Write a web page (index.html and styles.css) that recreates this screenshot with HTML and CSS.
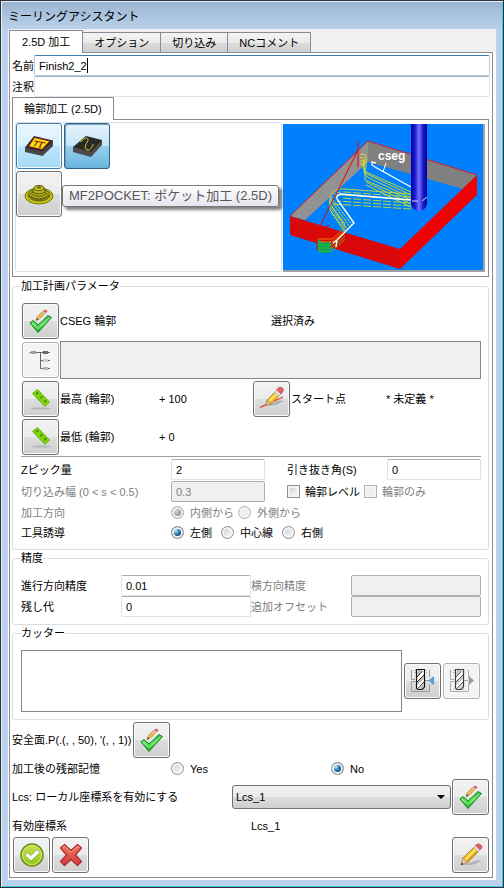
FILE: index.html
```html
<!DOCTYPE html>
<html lang="ja">

<head>
  <meta charset="UTF-8" />
  <meta name="viewport" content="width=device-width, initial-scale=1" />
  <title>ミーリングアシスタント</title>
  <link rel="stylesheet" href="styles.css">
</head>

<body>
  <svg class="symbols" aria-hidden="true">
    <defs>
      <linearGradient id="green" x1="0" y1="0" x2="0" y2="1">
        <stop offset="0" stop-color="#2fae3a" />
        <stop offset="0.5" stop-color="#5fe05a" />
        <stop offset="1" stop-color="#16a01c" />
      </linearGradient>
      <linearGradient id="lime" x1="0" y1="0" x2="0" y2="1">
        <stop offset="0" stop-color="#cfe05a" />
        <stop offset="1" stop-color="#8fc41c" />
      </linearGradient>
      <linearGradient id="red" x1="0" y1="0" x2="0" y2="1">
        <stop offset="0" stop-color="#ee7a5c" />
        <stop offset="1" stop-color="#cf3a3c" />
      </linearGradient>
      <linearGradient id="tool" x1="0" y1="0" x2="1" y2="0">
        <stop offset="0" stop-color="#0000a0" />
        <stop offset="0.25" stop-color="#1a1ad0" />
        <stop offset="0.5" stop-color="#7474ff" />
        <stop offset="0.75" stop-color="#1c1cd0" />
        <stop offset="1" stop-color="#000088" />
      </linearGradient>
    </defs>

    <symbol id="check" viewBox="0 0 24 24">
      <path d="M1 14 4 11.500 9 16 19 6.500 22.500 8.500 9 23.500Z" fill="url(#green)" stroke="#148a22" stroke-linejoin="round" />
      <path d="M3 14 9 19.500 20.500 8.500" fill="none" stroke="#a5f59c" />
      <path d="M7 11.500 8.500 7.500 13.500 2.500 16 4.500 11 9.500Z" fill="#f3bd55" stroke="#a8782c" stroke-width=".7" />
      <path d="M7 11.500 7.800 9.300 9.500 10.500Z" fill="#444" />
      <path d="M12.800 3.200 14 2 16.500 4 15.300 5.300Z" fill="#ccc" />
      <path d="M14 2Q16-.3 17.700 1.300T16.500 4Z" fill="#dc6260" />
    </symbol>

    <symbol id="tree" viewBox="0 0 24 24">
      <path d="M.5 4.500H21M11.500 4.500V20.500M11.500 12.500H21M11.500 20.500H21" fill="none" stroke="#444" />
      <path d="M2 3H7V6H2Z" fill="#8c8c8c" />
      <path d="M14 3H19V6H14Z" fill="#444" />
      <path d="M14 11H19V14H14Z" fill="#c4c4c4" />
      <path d="M14 19H19V22H14Z" fill="#aaa" />
    </symbol>

    <symbol id="ruler" viewBox="0 0 24 24">
      <ellipse cx="12" cy="21.500" rx="10" ry="1" fill="#b5b5b5" />
      <path d="M3.500 6.500 8.500 2.500 20.500 15 16 19.500Z" fill="#80d010" stroke="#66b80a" stroke-linejoin="round" />
      <path d="M7.500 7 9 5.500M11.500 11 13 9.500M15.500 15 17 13.500" stroke="#2d6408" stroke-width="1.200" />
    </symbol>

    <symbol id="pencil" viewBox="0 0 24 24">
      <path d="M4 22 19 17 23 18 13 22Z" fill="#888" opacity=".45" />
      <path d="M2 22 4 15 15.500 3.500 20 8 8.500 19.500Z" fill="#f3bd22" stroke="#98721c" stroke-width=".7" />
      <path d="M5.500 17.500 17.500 5.500" stroke="#fff08a" stroke-width="1.500" />
      <path d="M7.500 19 19 7.500" stroke="#c88808" />
      <path d="M2 22 4 15 6 16 6.500 18 8.500 19.500Z" fill="#eec897" stroke="#9b744c" stroke-width=".5" />
      <path d="M2 22 2.800 19.500 4.500 21.200Z" fill="#333" />
      <path d="M14.500 4.500 17 2 21.500 6.500 19 9Z" fill="#ddd" stroke="#999" stroke-width=".6" />
      <path d="M17.500 1.500Q19.500-.2 22 2T22 6L21 7 16.500 2.500Z" fill="#e36266" stroke="#bd4348" stroke-width=".5" />
    </symbol>

    <symbol id="start" viewBox="0 0 24 24">
      <path d="M8 19 18 13.500 24 14 16 18Z" fill="#888" opacity=".5" />
      <path d="M0 20.500 23 10" stroke="#f03030" stroke-width="1.200" />
      <path d="M5.500 18.500 7.500 12.500 16 4 20 8 11 17Z" fill="#f3bd22" stroke="#98721c" stroke-width=".7" />
      <path d="M9 14.500 17.500 6" stroke="#fff08a" stroke-width="1.500" />
      <path d="M5.500 18.500 7.500 12.500 11 17Z" fill="#deb98d" stroke="#886c50" stroke-width=".5" />
      <path d="M14.500 5.500 18 2 22 6 18.500 9.500Z" fill="#ddd" stroke="#999" stroke-width=".6" />
      <path d="M17.500 1.500Q20-1 22.500 1T22 6L21 7 16.500 2.500Z" fill="#e36266" stroke="#bd4348" stroke-width=".5" />
    </symbol>

    <symbol id="cutter" viewBox="0 0 24 24">
      <path d="M3 1.500H16M3 3.500H16M3 20.500H16" stroke="#a3bdd4" stroke-dasharray="2 1" />
      <path d="M.5 1V10.500H4M.5 12.500H4M.5 12.500V22.500H18.500V15M18.500 1V8M14 11.500H18" fill="none" stroke="#999" />
      <path d="M5.500 .5H13.500V18L11 20.500H7L5.500 19Z" fill="#fff" stroke="#111" stroke-width="1.200" />
      <path d="M7 1 11 1 8 6 6 6Z" fill="#bbb" />
      <path d="M6 13.500 13 6.500V9.500L6 16.500ZM8 20 13 14.500V17.500L10.500 20Z" fill="#bbb" />
      <path d="M6 8 11.500 2M6 13 13 6M7 19.500 13 13" stroke="#222" />
    </symbol>

    <symbol id="ok" viewBox="0 0 24 24">
      <circle cx="12" cy="12" r="11" fill="url(#lime)" stroke="#67921b" stroke-width="1.500" />
      <circle cx="12" cy="12" r="9.500" fill="none" stroke="#d3e872" />
      <path d="M5 12.500 7.500 9.500 11 12.500 17 6.500 20 9.500 11 18Z" fill="#fff" stroke="#78a32a" stroke-width=".7" stroke-linejoin="round" />
    </symbol>

    <symbol id="cancel" viewBox="0 0 24 24">
      <path d="M1.500 5 5.500 1.500 12 7.500 18.500 1.500 22.500 5 16.500 12 22.500 18.500 18.500 22.500 12 16.500 5.500 22.500 1.500 18.500 7.500 12Z" fill="url(#red)" stroke="#ac2a30" stroke-width="1.200" stroke-linejoin="round" />
      <path d="M3.500 5 5.500 3 12 9.500 18.500 3 20.500 5" fill="none" stroke="#f7a28a" />
    </symbol>
  </svg>

  <div class="window">
    <header class="titlebar">ミーリングアシスタント</header>

    <main class="panel">
      <nav class="tabs">
        <button type="button" class="tab active">2.5D 加工</button>
        <button type="button" class="tab">オプション</button>
        <button type="button" class="tab">切り込み</button>
        <button type="button" class="tab">NCコメント</button>
      </nav>

      <form class="pane">
        <div class="line">
          <label for="name">名前</label>
          <input class="field editing" id="name" type="text" value="Finish2_2">
        </div>
        <div class="line">
          <label for="comment">注釈</label>
          <input class="field" id="comment" type="text">
        </div>

        <div class="subtabs">
          <button type="button" class="tab active">輪郭加工 (2.5D)</button>
        </div>
        <div class="operation">
          <div class="tools">
            <button type="button" class="tool hover" aria-label="ポケット加工">
              <svg width="30" height="24" viewBox="0 0 30 24">
                <path d="M1 13.500V18L18.500 22 29 12V6.500Z" fill="#474747" />
                <path d="M1 13.500 10 2 29 6.500 18.500 17.500Z" fill="#2e2b2a" />
                <path d="M4.500 12.500 10.500 3.500 26 7 18 15.500Z" fill="#f8e010" stroke="#8f1b15" />
                <path d="M10.500 7 21.500 9M13.500 7.500 10.500 12M18 8.500 15.500 13H17.500" fill="none" stroke="#8c1c14" stroke-width="1.200" />
              </svg>
            </button>
            <button type="button" class="tool pressed" aria-label="輪郭加工">
              <svg width="30" height="24" viewBox="0 0 30 24">
                <path d="M1 13V18L19 23 30 11V6Z" fill="#4b4b4b" />
                <path d="M1 13 14 2 30 6 19 18Z" fill="#292929" />
                <path d="M8 7.500C11 7 13 2.500 15.500 4.500S11 12 14 15 19 15 21.500 10" fill="none" stroke="#d8d020" />
              </svg>
            </button>
            <button type="button" class="tool" aria-label="MF2POCKET">
              <svg width="30" height="24" viewBox="0 0 30 24">
                <ellipse cx="15" cy="14" rx="14" ry="8" fill="#c6c40c" stroke="#77751a" />
                <ellipse cx="15" cy="13" rx="11" ry="6" fill="#a5a316" stroke="#5f5d15" />
                <path d="M5 14Q9 12 10 6Q15 2 20 6Q21 12 25 14Q15 22 5 14Z" fill="#b4b214" stroke="#55531a" stroke-width=".8" />
                <path d="M9 10Q15 14 21 10M8 12Q15 17 22 12M6.500 14Q15 20 23.500 14" fill="none" stroke="#44421c" stroke-width=".8" />
                <ellipse cx="15" cy="6" rx="5" ry="2.500" fill="#d0cd13" stroke="#5f5d15" />
                <ellipse cx="15" cy="5.500" rx="2.500" ry="1" fill="#555316" />
              </svg>
            </button>
            <div class="tooltip" role="tooltip">MF2POCKET: ポケット加工 (2.5D)</div>
          </div>

          <svg class="preview" viewBox="0 0 200 146" role="img" aria-label="cseg">
            <defs>
              <path id="pass-upper" d="M77 31Q83 28 83 35V44L82 47V56L128 73" />
              <path id="pass-lower" d="M128 70 62 65Q50 64 47 73V80L62 100" />
              <path id="pass-end" d="M62 103 49 115H35" />
            </defs>
            <path d="M0 0H200V146H0Z" fill="#0080ff" />
            <path d="M7 92 85 17V38L22 96Z" fill="#929292" />
            <path d="M85 17 194 51 180 65 85 38Z" fill="#808080" />
            <path d="M7 92 117 125V145L7 111Z" fill="#d90909" />
            <path d="M117 125 194 51V71L117 145Z" fill="#ee0303" />
            <path d="M7 92 85 17 194 51" fill="none" stroke="#d51c2c" />
            <g fill="none" stroke="#f2f000" stroke-width=".8">
              <path d="M77 31Q83 28 83 35V44L82 47V56L128 76M77 34Q81 32 81 37V45L84 50 128 71M77 37H81V48L84 53 128 74M77 40H80V43M83 58 128 80M83 61 128 83M83 48 128 68" />
            </g>
            <g fill="none" stroke="#b6d63c">
              <use href="#pass-lower" />
              <use href="#pass-lower" y="3" stroke-dasharray="8 2" />
              <use href="#pass-lower" y="6" />
              <path d="M128 79 58 74M128 82 54 77M128 85 50 80" stroke-dasharray="8 2" />
            </g>
            <path d="M47 80 65 106M49 78 67 103M50 76 69 101M48 88 62 108" fill="none" stroke="#f2f000" stroke-dasharray="2 1" />
            <path d="M34 115 40 118H46L48 116V126L45 129H38L34 126Z" fill="#00a060" />
            <g fill="none" stroke="#62c820" stroke-width=".8">
              <use href="#pass-end" stroke="#ee9200" />
              <use href="#pass-end" y="3" stroke="#ee9200" />
              <use href="#pass-end" y="6" />
              <use href="#pass-end" y="9" />
              <use href="#pass-end" y="12" />
            </g>
            <path d="M75 17V43M75 26 34 108V126M34 108 47 101" fill="none" stroke="#f00000" />
            <path d="M93 39 89 38V41L92 43 128 63" fill="none" stroke="#fff" stroke-width="1.300" />
            <path d="M103 39 100 48" stroke="#fff" />
            <path d="M128 76 58 70Q53 71 54 75L71 99 54 116 50 119M54 116 53 123" fill="none" stroke="#fff" stroke-width="1.400" />
            <path d="M128 0H144V80Q142 87 136 87T128 80Z" fill="url(#tool)" />
            <path d="M129 77H135M139 77 144 73" stroke="#cfd4ff" />
            <text class="preview-text" x="95" y="36">cseg</text>
          </svg>
        </div>

        <fieldset class="group">
          <legend>加工計画パラメータ</legend>
          <div class="geometry">
            <button type="button" class="icon-button" aria-label="輪郭を選択"><svg><use href="#check" /></svg></button>
            <span class="wide">CSEG 輪郭</span>
            <span class="state">選択済み</span>

            <button type="button" class="icon-button" aria-label="ツリー" disabled><svg><use href="#tree" /></svg></button>
            <div class="tree-box"></div>

            <button type="button" class="icon-button" aria-label="最高"><svg><use href="#ruler" /></svg></button>
            <span>最高 (輪郭)</span>
            <span>+ 100</span>
            <button type="button" class="icon-button" aria-label="スタート点"><svg><use href="#start" /></svg></button>
            <span>スタート点</span>
            <span>* 未定義 *</span>

            <button type="button" class="icon-button" aria-label="最低"><svg><use href="#ruler" /></svg></button>
            <span>最低 (輪郭)</span>
            <span>+ 0</span>
          </div>

          <hr>

          <div class="values">
            <label for="zpick">Zピック量</label>
            <input class="field" id="zpick" type="text" value="2">
            <label class="third" for="angle">引き抜き角(S)</label>
            <input class="field" id="angle" type="text" value="0">

            <label class="off" for="step">切り込み幅 (0 &lt; s &lt; 0.5)</label>
            <input class="field" id="step" type="text" value="0.3" disabled>
            <div class="options third rest">
              <label><input type="checkbox">輪郭レベル</label>
              <label class="off"><input type="checkbox" disabled>輪郭のみ</label>
            </div>

            <span class="off">加工方向</span>
            <div class="options rest">
              <label class="off"><input type="radio" name="direction" checked disabled>内側から</label>
              <label class="off"><input type="radio" name="direction" disabled>外側から</label>
            </div>

            <span>工具誘導</span>
            <div class="options loose rest">
              <label><input type="radio" name="guide" checked>左側</label>
              <label><input type="radio" name="guide">中心線</label>
              <label><input type="radio" name="guide">右側</label>
            </div>
          </div>
        </fieldset>

        <fieldset class="group">
          <legend>精度</legend>
          <div class="accuracy">
            <label for="forward">進行方向精度</label>
            <input class="field" id="forward" type="text" value="0.01">
            <label class="off" for="side">横方向精度</label>
            <input class="field" id="side" type="text" disabled>
            <label for="stock">残し代</label>
            <input class="field" id="stock" type="text" value="0">
            <label class="off" for="offset">追加オフセット</label>
            <input class="field" id="offset" type="text" disabled>
          </div>
        </fieldset>

        <fieldset class="group">
          <legend>カッター</legend>
          <div class="cutters">
            <div class="cutter-list"></div>
            <button type="button" class="icon-button" aria-label="カッターを追加">
              <svg viewBox="0 0 24 24"><use href="#cutter" /><path d="M18 11.500 22.500 8V15.500Z" fill="#55a7e5" stroke="#2b7fc2" stroke-width=".7" /></svg>
            </button>
            <button type="button" class="icon-button" aria-label="カッターを外す" disabled>
              <svg viewBox="0 0 24 24"><use href="#cutter" /><path d="M23.500 11.500 19 7.500V15.500Z" fill="#888" stroke="#777" stroke-width=".7" /></svg>
            </button>
          </div>
        </fieldset>

        <div class="safety">
          <span>安全面.P(.(, , 50), '(, , 1))</span>
          <button type="button" class="icon-button" aria-label="安全面を選択"><svg><use href="#check" /></svg></button>
        </div>

        <div class="remainder">
          <span>加工後の残部記憶</span>
          <label><input type="radio" name="remainder">Yes</label>
          <label><input type="radio" name="remainder" checked>No</label>
        </div>

        <div class="lcs">
          <label for="lcs">Lcs: ローカル座標系を有効にする</label>
          <span class="dropdown">
            <select id="lcs">
              <option>Lcs_1</option>
            </select>
          </span>
          <button type="button" class="icon-button" aria-label="座標系を選択"><svg><use href="#check" /></svg></button>
        </div>

        <div class="active-lcs">
          <span>有効座標系</span>
          <span>Lcs_1</span>
        </div>

        <div class="actions">
          <button type="button" class="icon-button" aria-label="OK"><svg><use href="#ok" /></svg></button>
          <button type="button" class="icon-button" aria-label="キャンセル"><svg><use href="#cancel" /></svg></button>
          <button type="button" class="icon-button edit" aria-label="編集"><svg><use href="#pencil" /></svg></button>
        </div>
      </form>
    </main>
  </div>
</body>

</html>
```
FILE: styles.css
```css
* {
  box-sizing: border-box;
}

body {
  margin: 0;
  background: #b9d1ea;
  color: #000;
}

body,
button,
input,
select {
  font-family: "Liberation Sans", "Noto Sans CJK JP", sans-serif;
  font-size: 11px;
  line-height: 14px;
}

.symbols {
  position: absolute;
  width: 0;
  height: 0;
}

/* window frame */
.window {
  display: flex;
  flex-direction: column;
  min-height: 100vh;
  padding: 0 7px 7px;
  border: 1px solid #30303a;
  background: linear-gradient(#9ab4d1, #b9d1ea 28px);
  box-shadow: inset 1px 1px #e8f2fb, inset -1px -1px #3fc8e8;
}

.titlebar {
  height: 28px;
  padding-top: 2px;
  font-size: 12px;
  line-height: 28px;
}

.panel {
  display: flex;
  flex: 1;
  flex-direction: column;
  padding: 0 3px 2px 1px;
  background: linear-gradient(#f0f0f0 23px, #fff 23px);
}

/* tabs */
.tabs,
.subtabs {
  display: flex;
  align-items: flex-end;
  height: 23px;
  white-space: nowrap;
}

.tab {
  height: 20px;
  margin-left: -1px;
  padding: 0 11px;
  border: 1px solid #898c95;
  border-bottom: 0;
  background: linear-gradient(#f3f3f3, #ebebeb 50%, #dddddd 51%, #cfcfcf);
  color: #000;
}

.tab.active {
  position: relative;
  height: 23px;
  margin: 0 0 -1px;
  padding: 0 12px;
  background: #fff;
}

.subtabs .tab.active {
  padding: 0 11px;
}

.pane {
  flex: 1;
  padding: 2px;
  border: 1px solid #898c95;
  background: #fff;
}

.line {
  display: flex;
  align-items: center;
}

.line .field {
  flex: 1;
}

/* controls */
.field {
  width: 100%;
  min-width: 0;
  height: 21px;
  padding: 0 4px;
  border: 1px solid #e2e3ea;
  border-top-color: #abadb3;
  border-radius: 2px;
  background: #fff;
  color: #000;
}

.field:disabled {
  border-color: #afafaf;
  background: #f0f0f0;
  color: #808080;
}

.field.editing {
  border-color: #b5cfe7;
  border-top-color: #3d7bad;
  background: linear-gradient(#000, #000) 52px 2px / 1px 15px no-repeat #fff;
}

input[type="radio"],
input[type="checkbox"] {
  flex: none;
  appearance: none;
  width: 13px;
  height: 13px;
  margin: 0 6px 0 0;
  border: 1px solid #8e8f8f;
  background: linear-gradient(135deg, #c5cad0, #f6f6f6 80%);
  box-shadow: inset 0 0 0 2px #f4f4f4;
}

input[type="checkbox"] {
  margin-right: 5px;
}

input[type="radio"] {
  border-radius: 50%;
}

input[type="radio"]:checked {
  background: radial-gradient(circle at 4px 4px, #c5efff, #2a83b8 30%, #0b2c4e 70%);
}

input:disabled {
  border-color: #b1b1b1;
}

input[type="radio"]:disabled,
input[type="checkbox"]:disabled {
  background: #efefef;
}

input[type="radio"]:checked:disabled {
  background: radial-gradient(circle at 4px 4px, #ddd, #777 70%);
}

.off {
  color: #808080;
}

.icon-button,
.tool {
  display: flex;
  flex: none;
  align-items: center;
  justify-content: center;
  width: 37px;
  height: 36px;
  padding: 0;
  border: 1px solid #707070;
  border-radius: 3px;
  background: linear-gradient(#f2f2f2, #ebebeb 50%, #dddddd 51%, #cfcfcf);
  box-shadow: inset 0 0 0 1px #fafafa;
}

.icon-button svg {
  width: 24px;
  height: 24px;
}

.icon-button:disabled {
  border-color: #adb2b5;
  background: #f4f4f4;
}

.icon-button:disabled svg {
  opacity: 0.8;
}

/* operation chooser */
.operation {
  display: flex;
  gap: 1px;
  margin-right: 1px;
  padding: 2px 3px 4px 2px;
  border: 1px solid #898c95;
}

.subtabs {
  height: 22px;
}

.tools {
  position: relative;
  display: grid;
  flex: 1;
  grid-template-columns: 46px 46px;
  grid-auto-rows: 46px;
  gap: 2px;
  height: 150px;
  border: 1px solid #d5dfe9;
  border-radius: 3px;
}

.tool {
  width: 46px;
  height: 46px;
}

.tool.hover {
  border-color: #3c7fb1;
  background: linear-gradient(#eaf6fd, #d9f0fc 50%, #bee6fd 51%, #a7d9f5);
}

.tool.pressed {
  border-color: #2c628b;
  background: linear-gradient(#e5f4fc, #c4e5f6 50%, #98d1ef 51%, #68b3db);
  box-shadow: inset 1px 1px 1px #7b9db2;
}

.tooltip {
  position: absolute;
  top: 62px;
  left: 46px;
  z-index: 1;
  padding: 0 6px;
  border: 1px solid #767676;
  border-radius: 3px;
  background: linear-gradient(#fff, #e4e5f0);
  box-shadow: 3px 3px 3px rgba(0, 0, 0, 0.5);
  color: #575757;
  font-size: 13px;
  line-height: 20px;
  white-space: nowrap;
}

.preview {
  flex: none;
  width: 202px;
  height: 148px;
  margin-top: 2px;
  border: solid #a0a0a0;
  border-width: 0 2px 2px 0;
}

.preview-text {
  fill: #fff;
  font-size: 12px;
  font-weight: bold;
}

/* groups */
.group {
  min-width: 0;
  margin: 1px 1px 0 0;
  padding: 10px 7px 7px 8px;
  border: 1px solid #d5dfe5;
  border-radius: 3px;
}

.operation + .group {
  margin-top: 2px;
}

.group legend {
  padding: 0;
}

.geometry {
  display: grid;
  grid-template-columns: 39px 99fr 93fr 39px 95fr 95fr;
  row-gap: 2px;
  align-items: center;
}

.geometry .icon-button {
  margin-left: 1px;
}

.geometry .wide {
  grid-column: span 2;
}

.geometry .state {
  grid-column: span 3;
  padding-left: 19px;
}

.tree-box {
  grid-column: 2 / -1;
  height: 38px;
  border: 1px solid #828790;
  background: #f0f0f0;
}

hr {
  margin: 1px 0 2px;
  border: 0;
  border-top: 1px solid #a0a0a0;
}

.values {
  display: grid;
  grid-template-columns: 150fr 94fr 22px 100fr 94fr;
  grid-template-rows: 21px 21px 19px 19px;
  row-gap: 1px;
  align-items: center;
}

.third {
  grid-column-start: 4;
}

.rest {
  grid-column-end: -1;
}

.options {
  display: flex;
  gap: 4px;
}

.options:not(.third) {
  grid-column-start: 2;
}

.options.loose {
  gap: 9px;
}

.options label,
.remainder label {
  display: flex;
  align-items: center;
}

.accuracy {
  display: grid;
  grid-template-columns: 100fr 130fr 100fr 130fr;
  align-items: center;
}

.cutters {
  display: flex;
  gap: 2px;
  align-items: center;
  padding-right: 1px;
}

.cutter-list {
  flex: 1;
  height: 62px;
  border: 1px solid #828790;
}

/* bottom rows */
.safety {
  display: flex;
  gap: 2px;
  align-items: center;
  margin-top: 2px;
}

.remainder {
  display: grid;
  grid-template-columns: 159fr 160fr 159fr;
  align-items: center;
  height: 21px;
}

.lcs {
  display: grid;
  grid-template-columns: 219fr 219fr 37px;
  column-gap: 1px;
  align-items: center;
  margin-right: 1px;
}

.dropdown {
  position: relative;
}

.dropdown::after {
  content: "";
  position: absolute;
  top: 10px;
  right: 6px;
  border: 4px solid transparent;
  border-top-color: #000;
  border-bottom: 0;
  pointer-events: none;
}

.dropdown select {
  display: block;
  appearance: none;
  width: 100%;
  height: 24px;
  padding: 0 3px;
  border: 1px solid #707070;
  border-radius: 3px;
  background: linear-gradient(#f2f2f2, #ebebeb 50%, #dddddd 51%, #cfcfcf);
  color: #000;
}

.active-lcs {
  display: grid;
  grid-template-columns: 1fr 1fr;
  align-items: center;
  height: 22px;
}

.actions {
  display: flex;
  gap: 2px;
  padding: 0 1px 2px;
}

.actions .edit {
  margin-left: auto;
}
```
